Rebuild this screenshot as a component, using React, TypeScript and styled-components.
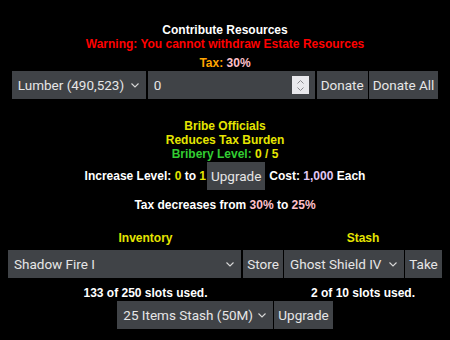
import React from 'react'
import styled, { createGlobalStyle } from 'styled-components'

const GlobalStyle = createGlobalStyle`
    html, body {
        margin: 0;
        padding: 0;
        background: #000;
    }
    body {
        font-family: "Liberation Sans", Arial, sans-serif;
        color: #fff;
    }
`

const Page = styled.div`
    width: 450px;
    height: 340px;
    display: flex;
    flex-direction: column;
    align-items: center;
    padding-top: 23px;
    box-sizing: border-box;
`

const Section = styled.div<{ $top?: number }>`
    display: flex;
    flex-direction: column;
    align-items: center;
    margin-top: ${props => props.$top ?? 0}px;
`

const Line = styled.div<{ $color?: string; $top?: number }>`
    font-size: 12px;
    font-weight: bold;
    line-height: 14px;
    text-align: center;
    white-space: nowrap;
    color: ${props => props.$color ?? '#fff'};
    margin-top: ${props => props.$top ?? 0}px;
`

const Hl = styled.span<{ $color: string }>`
    color: ${props => props.$color};
`

const ControlRow = styled.div<{ $top?: number }>`
    display: flex;
    gap: 2px;
    margin-top: ${props => props.$top ?? 0}px;
`

const controlBase = `
    box-sizing: border-box;
    height: 28px;
    background: #404347;
    color: #e6e6e6;
    border: none;
    border-radius: 0;
    font-family: Roboto, "Noto Sans", sans-serif;
    font-size: 13.5px;
    outline: none;
`

const SelectWrap = styled.div<{ $width: number }>`
    position: relative;
    width: ${props => props.$width}px;
    flex: none;
`

const NativeSelect = styled.select`
    ${controlBase}
    appearance: none;
    width: 100%;
    padding: 0 18px 0 6px;
`

const Chevron = styled.svg`
    position: absolute;
    right: 7px;
    top: 12px;
    pointer-events: none;
`

const Button = styled.button`
    ${controlBase}
    padding: 0 4px;
    flex: none;
    cursor: pointer;
`

const NumberBox = styled.div<{ $width: number }>`
    ${controlBase}
    width: ${props => props.$width}px;
    display: flex;
    align-items: center;
    padding: 0 6px 0 6px;
`

const NumberInput = styled.input`
    flex: 1;
    min-width: 0;
    background: transparent;
    border: none;
    outline: none;
    color: #e6e6e6;
    font-family: Roboto, "Noto Sans", sans-serif;
    font-size: 13.5px;
    padding: 0;
`

const Spinner = styled.div`
    width: 17px;
    height: 18px;
    background: #e9e9ed;
    display: flex;
    flex-direction: column;
    align-items: center;
    justify-content: center;
    gap: 3px;
`

const UpgradeLine = styled.div`
    display: flex;
    align-items: center;
    font-size: 12px;
    font-weight: bold;
    margin-top: 1px;
`

const CostText = styled.span`
    margin-left: 4px;
`

const StashGrid = styled.div`
    display: grid;
    grid-template-columns: 275px 158px;
    column-gap: 1px;
    margin-top: 19px;
`

const Cell = styled.div<{ $top?: number }>`
    display: flex;
    justify-content: center;
    margin-top: ${props => props.$top ?? 0}px;
`

const CellRow = styled.div<{ $gap: number }>`
    display: flex;
    gap: ${props => props.$gap}px;
    width: 100%;
`

const ChevronIcon = () => (
    <Chevron width="8" height="5" viewBox="0 0 8 5">
        <path d="M0.5 0.5 L4 4 L7.5 0.5" fill="none" stroke="#d8d8d8" strokeWidth="1.1" />
    </Chevron>
)

const Select = ({ width, value }: { width: number; value: string }) => (
    <SelectWrap $width={width}>
        <NativeSelect defaultValue={value}>
            <option>{value}</option>
        </NativeSelect>
        <ChevronIcon />
    </SelectWrap>
)

export default function App() {
    return (
        <>
            <GlobalStyle />
            <Page>
                <Section>
                    <Line>Contribute Resources</Line>
                    <Line $color="#ff0000">Warning: You cannot withdraw Estate Resources</Line>
                    <Line $color="#ffa500" $top={5}>
                        Tax: <Hl $color="#ffc0cb">30%</Hl>
                    </Line>
                    <ControlRow $top={1}>
                        <Select width={134} value="Lumber (490,523)" />
                        <NumberBox $width={167}>
                            <NumberInput defaultValue="0" />
                            <Spinner>
                                <svg width="7" height="4" viewBox="0 0 7 4">
                                    <path d="M0.5 3.5 L3.5 0.5 L6.5 3.5" fill="none" stroke="#8a8a8f" strokeWidth="1" />
                                </svg>
                                <svg width="7" height="4" viewBox="0 0 7 4">
                                    <path d="M0.5 0.5 L3.5 3.5 L6.5 0.5" fill="none" stroke="#8a8a8f" strokeWidth="1" />
                                </svg>
                            </Spinner>
                        </NumberBox>
                        <Button>Donate</Button>
                        <Button style={{ marginLeft: -1 }}>Donate All</Button>
                    </ControlRow>
                </Section>

                <Section $top={20}>
                    <Line $color="#e5e500">Bribe Officials</Line>
                    <Line $color="#e5e500">Reduces Tax Burden</Line>
                    <Line $color="#32cd32">
                        Bribery Level: <Hl $color="#e5e500">0 / 5</Hl>
                    </Line>
                    <UpgradeLine>
                        <span>
                            Increase Level: <Hl $color="#e5e500">0</Hl> to <Hl $color="#e5e500">1</Hl>
                        </span>
                        <Button style={{ marginLeft: 1 }}>Upgrade</Button>
                        <CostText>
                            Cost: <Hl $color="#e0c8f5">1,000</Hl> Each
                        </CostText>
                    </UpgradeLine>
                    <Line $top={8}>
                        Tax decreases from <Hl $color="#ffc0cb">30%</Hl> to <Hl $color="#ffc0cb">25%</Hl>
                    </Line>
                </Section>

                <StashGrid>
                    <Line $color="#e5e500">Inventory</Line>
                    <Line $color="#e5e500">Stash</Line>
                    <Cell $top={5}>
                        <CellRow $gap={2}>
                            <Select width={233} value="Shadow Fire I" />
                            <Button style={{ flex: 1 }}>Store</Button>
                        </CellRow>
                    </Cell>
                    <Cell $top={5}>
                        <CellRow $gap={1}>
                            <Select width={120} value="Ghost Shield IV" />
                            <Button style={{ flex: 1 }}>Take</Button>
                        </CellRow>
                    </Cell>
                    <Line $top={8}>133 of 250 slots used.</Line>
                    <Line $top={8}>2 of 10 slots used.</Line>
                </StashGrid>

                <ControlRow $top={1}>
                    <Select width={156} value="25 Items Stash (50M)" />
                    <Button style={{ marginLeft: -1 }}>Upgrade</Button>
                </ControlRow>
            </Page>
        </>
    )
}
